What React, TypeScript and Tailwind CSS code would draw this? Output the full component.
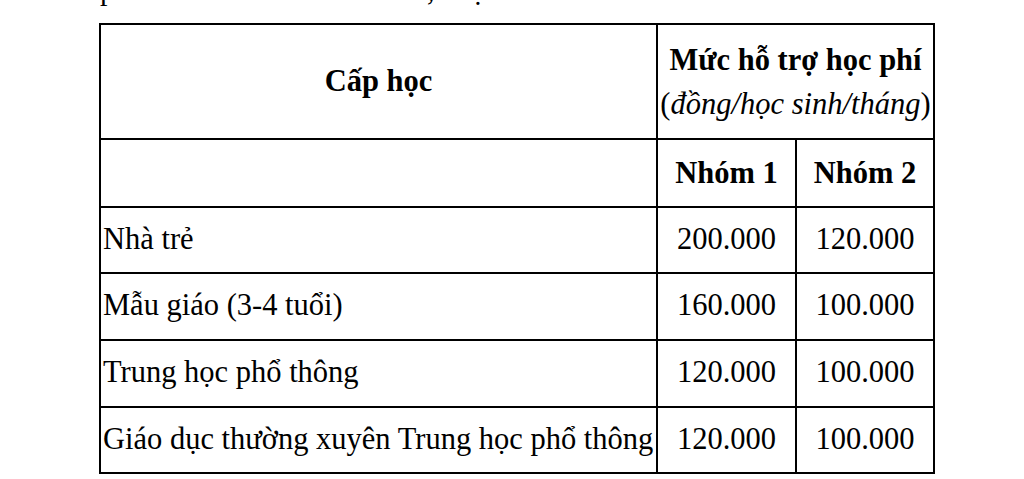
const rows = [
  { name: 'Nhà trẻ', g1: '200.000', g2: '120.000' },
  { name: 'Mẫu giáo (3-4 tuổi)', g1: '160.000', g2: '100.000' },
  { name: 'Trung học phổ thông', g1: '120.000', g2: '100.000' },
  { name: 'Giáo dục thường xuyên Trung học phổ thông', g1: '120.000', g2: '100.000' },
]

export default function App() {
  return (
    <div className="w-[1024px] h-[479px] overflow-hidden bg-white text-black font-['Liberation_Serif']">
      {/* tail of the paragraph above, cut by the top of the shot */}
      <div className="h-[23px] overflow-hidden">
        <div className="-mt-[25px] pl-[100px] text-[30px] leading-none whitespace-nowrap flex">
          <span className="inline-block w-[327px]">phí như sau</span>
          <span className="inline-block w-[30px]">,</span>
          <span>cụ</span>
        </div>
      </div>

      <div className="ml-[99px] w-[836px] grid grid-cols-[555px_137px_136px] grid-rows-[113px_66px_64px_65px_65px_64px] gap-[2px] p-[2px] bg-black text-[30.5px] leading-none">
        <div className="bg-white flex items-center justify-center font-bold">Cấp học</div>
        <div className="col-span-2 bg-white flex flex-col items-center justify-center leading-[44px]">
          <span className="font-bold">Mức hỗ trợ học phí</span>
          <span className="whitespace-nowrap">
            (<span className="italic">đồng/học sinh/tháng</span>)
          </span>
        </div>

        <div className="bg-white" />
        <div className="bg-white flex items-center justify-center font-bold">Nhóm 1</div>
        <div className="bg-white flex items-center justify-center font-bold">Nhóm 2</div>

        {rows.map((r) => (
          <>
            <div key={r.name} className="bg-white flex items-center pl-[2px] pb-[2px] whitespace-nowrap">
              {r.name}
            </div>
            <div className="bg-white flex items-center justify-center pb-[2px]">{r.g1}</div>
            <div className="bg-white flex items-center justify-center pb-[2px]">{r.g2}</div>
          </>
        ))}
      </div>
    </div>
  )
}
